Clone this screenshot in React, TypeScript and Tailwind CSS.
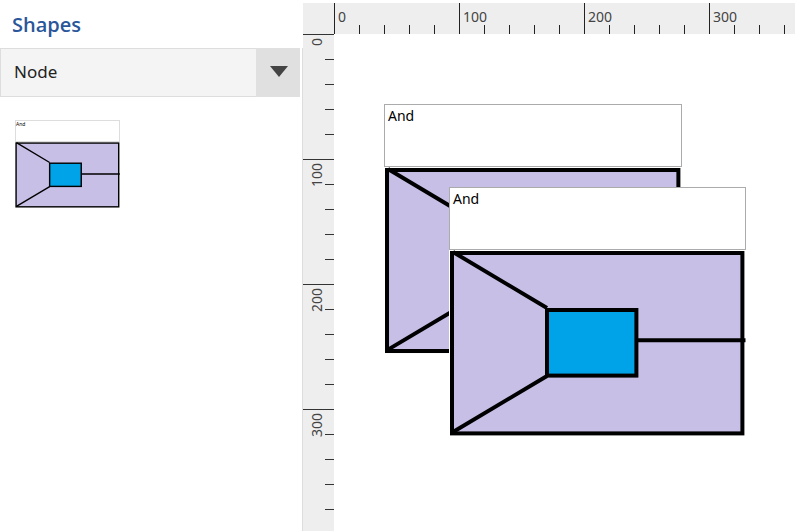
type ShapeNodeProps = {
  text: string;
  className?: string;
  labelClassName: string;
};

const nodes = [
  { id: "and-1", text: "And", className: "left-[50px] top-[70px] w-[298px]" },
  { id: "and-2", text: "And", className: "left-[115px] top-[153px] w-[297px]" },
];

const rulerMarks = [0, 100, 200, 300];

function GateDrawing({ className }: { className: string }) {
  return (
    <svg viewBox="0 0 297 186" className={className} aria-hidden="true">
      <g stroke="#000" strokeWidth="4">
        <rect x="3" y="3" width="290.4" height="180.4" fill="#c8bfe7" />
        <path d="M4 2 98 58M4 182 98 126M188 90.3H296.5" fill="none" />
        <rect x="98" y="60" width="89.4" height="65.6" fill="#00a2e8" />
      </g>
    </svg>
  );
}

function ShapeNode({ text, className, labelClassName }: ShapeNodeProps) {
  return (
    <div className={`bg-white ${className ?? ""}`}>
      <p className={`border text-left text-black ${labelClassName}`}>{text}</p>
      <GateDrawing className="block w-full" />
    </div>
  );
}

function HorizontalRuler() {
  return (
    <div className="flex h-[31px] min-w-0 flex-1 overflow-hidden bg-[#eeeeee]">
      {rulerMarks.map((mark) => (
        <div key={mark} className="relative flex h-full shrink-0 items-end">
          <span className="absolute left-1 top-1 text-sm leading-5">{mark}</span>
          <i className="h-full w-[25px] border-l border-[#222222]" />
          <i className="h-[9px] w-[25px] border-l border-[#222222]" />
          <i className="h-[9px] w-[25px] border-l border-[#222222]" />
          <i className="h-[9px] w-[25px] border-l border-[#222222]" />
          <i className="h-[9px] w-[25px] border-l border-[#222222]" />
        </div>
      ))}
    </div>
  );
}

function VerticalRuler() {
  return (
    <div className="flex w-[31px] shrink-0 flex-col overflow-hidden bg-[#eeeeee]">
      {rulerMarks.map((mark) => (
        <div key={mark} className="relative flex w-full shrink-0 flex-col items-end">
          <span className="absolute left-1 top-1 rotate-180 text-sm leading-5 [writing-mode:vertical-rl]">
            {mark}
          </span>
          <i className="h-[25px] w-full border-t border-[#333333]" />
          <i className="h-[25px] w-[9px] border-t border-[#333333]" />
          <i className="h-[25px] w-[9px] border-t border-[#333333]" />
          <i className="h-[25px] w-[9px] border-t border-[#333333]" />
          <i className="h-[25px] w-[9px] border-t border-[#333333]" />
        </div>
      ))}
    </div>
  );
}

function ShapesPanel() {
  return (
    <aside className="flex w-[303px] shrink-0 flex-col">
      <h2 className="flex h-12 items-center px-3 pt-[2px] font-['Open_Sans','Noto_Sans',sans-serif] text-xl font-semibold text-[#2b579a]">
        <label htmlFor="shape-group">Shapes</label>
      </h2>
      <div className="flex-1 border-r border-[#dddddd] pr-[2px]">
        <div className="relative">
          <select
            id="shape-group"
            className="h-[49px] w-full appearance-none border border-[#dddddd] bg-[#f4f4f4] pb-[2px] pl-[13px] pr-12 text-[17px] text-[#222222]"
          >
            <option>Node</option>
          </select>
          <span className="pointer-events-none absolute inset-y-0 right-0 flex w-11 items-center justify-center bg-[#e0e0e0] pb-[2px] pl-[2px]">
            <svg viewBox="0 0 18 11" className="h-[11px] w-[18px]" aria-hidden="true">
              <path d="M0 0H18L9 11Z" fill="#444" />
            </svg>
          </span>
        </div>
        <button type="button" aria-label="And node" className="ml-[15px] mt-[23px] block w-[105px]">
          <ShapeNode
            text="And"
            labelClassName="h-[22px] border-[#dddddd] text-[5px] leading-[6px]"
          />
        </button>
      </div>
    </aside>
  );
}

export default function App() {
  return (
    <div className="flex h-screen overflow-hidden bg-white font-['Noto_Sans','Open_Sans',sans-serif]">
      <ShapesPanel />
      <main className="flex min-w-0 flex-1 flex-col pt-[3px] text-[#444444]">
        <div className="flex shrink-0">
          <div className="w-[31px] shrink-0 bg-[#eeeeee]" />
          <HorizontalRuler />
        </div>
        <div className="flex min-h-0 flex-1">
          <VerticalRuler />
          <div className="relative min-w-0 flex-1 overflow-hidden bg-white">
            {nodes.map((node) => (
              <ShapeNode
                key={node.id}
                text={node.text}
                className={`absolute ${node.className}`}
                labelClassName="h-[63px] border-[#ababab] px-[3px] text-sm leading-[22px]"
              />
            ))}
          </div>
        </div>
      </main>
    </div>
  );
}
